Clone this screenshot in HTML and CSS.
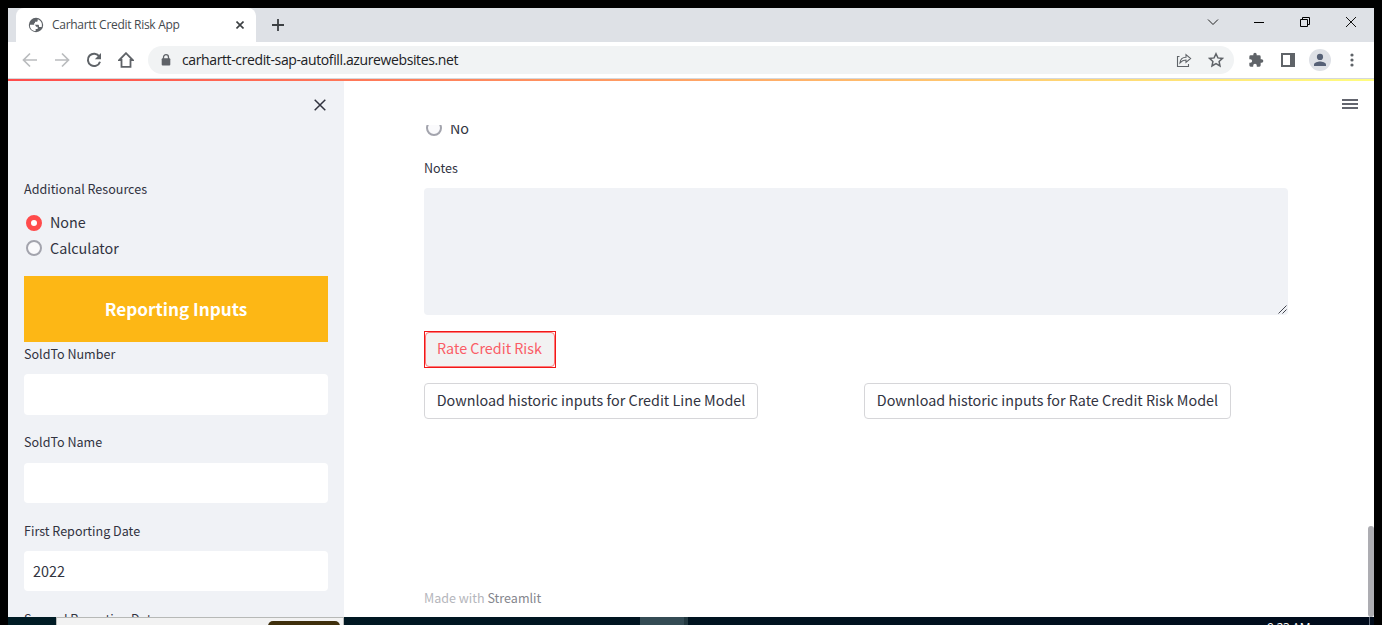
FILE: index.html
```html
<!DOCTYPE html>
<html lang="en">
<head>
<meta charset="utf-8">
<title>Carhartt Credit Risk App</title>
<link rel="stylesheet" href="styles.css">
</head>
<body>
<div class="browser">
  <header class="tabstrip">
    <div class="tab">
      <svg class="globe" viewBox="0 0 24 24" width="16" height="16"><circle cx="12" cy="12" r="10.800" fill="#5f6368"/><path d="M3 11.500h6c2 0 3 1.500 3 3h2.500v3.500h-3v3C6 21 2.500 17 3 11.500zM14.500 3.500v2c0 1-1 1.500-2 1.500h-2v2.500h-1.500v2h6c1 0 1.500 1 1.500 2v1.500h4C22 10 19.500 5 14.500 3.500z" fill="#fff"/></svg>
      <span class="tab-title">Carhartt Credit Risk App</span>
      <svg class="tab-close" viewBox="0 0 8 8" width="8" height="8"><path d="M.5.5l7 7M7.500.5l-7 7" stroke="#3c4043" stroke-width="1.600"/></svg>
    </div>
    <svg class="new-tab" viewBox="0 0 12 12" width="12" height="12"><path d="M6 0v12M0 6h12" stroke="#3c4043" stroke-width="1.800"/></svg>
    <div class="window-controls">
      <svg viewBox="0 0 12 12" width="12" height="12"><path d="M1 3.500l5 5 5-5" fill="none" stroke="#222"/></svg>
      <svg viewBox="0 0 12 12" width="12" height="12"><path d="M1 6.500h10" stroke="#000"/></svg>
      <svg viewBox="0 0 12 12" width="12" height="12"><path d="M1.500 3.500h7v7h-7zM3.500 3V1.500h7v7H9" fill="none" stroke="#000"/></svg>
      <svg viewBox="0 0 12 12" width="12" height="12"><path d="M1 1l10 10M11 1L1 11" stroke="#111"/></svg>
    </div>
  </header>
  <nav class="toolbar">
    <div class="nav-icons">
      <svg viewBox="0 0 16 16" width="16" height="16"><path d="M15 8H2M8 1.500L1.500 8 8 14.500" fill="none" stroke="#babcbe" stroke-width="1.700"/></svg>
      <svg viewBox="0 0 16 16" width="16" height="16"><path d="M1 8h13M8 1.500L14.500 8 8 14.500" fill="none" stroke="#babcbe" stroke-width="1.700"/></svg>
      <svg viewBox="0 0 16 16" width="16" height="16"><path d="M13.300 4.500A6.200 6.200 0 1 0 14 9.700" fill="none" stroke="#5f6368" stroke-width="2"/><path d="M15 1v6.200H8.800z" fill="#5f6368"/></svg>
      <svg viewBox="0 0 16 16" width="16" height="16"><path d="M8 1.200L1.300 8H3.500v6.800h9V8h2.200z" fill="none" stroke="#5f6368" stroke-width="1.800"/></svg>
    </div>
    <div class="address">
      <svg class="lock" viewBox="0 0 10 12" width="10" height="12"><path d="M2.500 5V3.200a2.500 2.500 0 0 1 5 0V5" fill="none" stroke="#5f6368" stroke-width="1.300"/><rect x=".7" y="4.300" width="8.600" height="7.200" rx="1" fill="#5f6368"/></svg>
      <span class="url">carhartt-credit-sap-autofill.azurewebsites.net</span>
      <svg class="share" viewBox="0 0 16 16" width="16" height="16"><path d="M3.500 4.500h-2v10h11V12M4 10.800c.4-3.800 2.500-5.600 6-5.600V2.600l4.600 3.900-4.600 3.900V8C7.500 8 5.500 9 4 10.800z" fill="none" stroke="#5f6368" stroke-width="1.100"/></svg>
      <svg viewBox="0 0 16 16" width="16" height="16"><path d="M8 1.800l1.900 4.100 4.600.5-3.400 3.100.9 4.500-4-2.300L4 14l.9-4.500L1.500 6.400l4.600-.5z" fill="none" stroke="#5f6368" stroke-width="1.500"/></svg>
    </div>
    <div class="tools">
      <svg viewBox="0 0 24 24" width="16" height="16"><path d="M20.500 11H19V7a2 2 0 0 0-2-2h-4V3.500a2.500 2.500 0 0 0-5 0V5H4a2 2 0 0 0-2 2v3.800h1.500a2.700 2.700 0 0 1 0 5.400H2V20a2 2 0 0 0 2 2h3.800v-1.500a2.700 2.700 0 0 1 5.400 0V22H17a2 2 0 0 0 2-2v-4h1.500a2.500 2.500 0 0 0 0-5z" fill="#5f6368"/></svg>
      <svg viewBox="0 0 14 14" width="14" height="14"><path d="M0 0h14v14H0zM2 2v10h7V2z" fill="#5f6368" fill-rule="evenodd"/></svg>
      <svg class="avatar" viewBox="0 0 22 22" width="22" height="22"><circle cx="11" cy="11" r="11" fill="#dee1e6"/><circle cx="11" cy="7.900" r="3.100" fill="#566176"/><path d="M5 17v-1.600c0-2 4-3 6-3s6 1 6 3V17z" fill="#566176"/></svg>
      <svg class="kebab" viewBox="0 0 4 14" width="4" height="14"><g fill="#5f6368"><circle cx="2" cy="2" r="1.600"/><circle cx="2" cy="7" r="1.600"/><circle cx="2" cy="12" r="1.600"/></g></svg>
    </div>
  </nav>
  <div class="decoration"></div>
  <div class="app">
    <aside class="sidebar">
      <svg class="collapse" viewBox="0 0 12 12" width="12" height="12"><path d="M.7.7l10.600 10.600M11.300.7L.7 11.300" stroke="#31333f" stroke-width="1.500"/></svg>
      <p class="label resources">Additional Resources</p>
      <label class="option"><span class="radio checked"></span><span>None</span></label>
      <label class="option calc"><span class="radio"></span><span>Calculator</span></label>
      <h2 class="banner">Reporting Inputs</h2>
      <div class="field first"><p class="label">SoldTo Number</p><div class="input"></div></div>
      <div class="field second"><p class="label">SoldTo Name</p><div class="input"></div></div>
      <div class="field"><p class="label">First Reporting Date</p><div class="input">2022</div></div>
      <div class="field"><p class="label">Second Reporting Date</p></div>
    </aside>
    <main class="main">
      <svg class="menu" viewBox="0 0 16 10" width="16" height="10"><path d="M0 1h16M0 5h16M0 9h16" stroke="#31333f" stroke-width="1.600"/></svg>
      <div class="scroller">
        <label class="option no"><span class="radio"></span><span>No</span></label>
        <p class="label notes">Notes</p>
        <div class="textarea"><svg viewBox="0 0 9 9" width="9" height="9"><path d="M.5 8.500l8-8M4.500 8.500l4-4" stroke="#44464f" stroke-width="1"/></svg></div>
        <div class="highlight"><button class="btn rate">Rate Credit Risk</button></div>
        <div class="downloads">
          <button class="btn line">Download historic inputs for Credit Line Model</button>
          <button class="btn risk">Download historic inputs for Rate Credit Risk Model</button>
        </div>
        <footer class="footer">Made with <span>Streamlit</span></footer>
      </div>
      <div class="scrollbar"></div>
    </main>
  </div>
</div>
<div class="taskbar">
  <div class="search"><span></span></div>
  <div class="active-app"></div>
  <div class="clock">9:23 AM</div>
  <div class="peek"></div>
</div>
</body>
</html>
```
FILE: styles.css
```css
* { box-sizing: border-box; }
svg { display: block; flex: none; }
body {
  margin: 0; padding: 8px 8px 0; width: 1382px; height: 625px; overflow: hidden;
  background: #000; color: #31333f;
  font: 14.35px/24px "Noto Sans CJK SC", "Open Sans", sans-serif;
}
p, h2 { margin: 0; }
.browser { height: 609px; display: flex; flex-direction: column; background: #fff; overflow: hidden; }

.tabstrip { height: 34px; flex: none; display: flex; align-items: center; background: #dee1e6; }
.tab {
  width: 240px; height: 34px; margin-left: 8px; padding: 0 12px; display: flex; align-items: center;
  background: #fff; border-radius: 8px 8px 0 0;
}
.tab-title { margin-left: 8px; font: 12px/16px "Open Sans", sans-serif; color: #45494d; white-space: nowrap; letter-spacing: -.29px; }
.tab-close { margin-left: auto; }
.new-tab { margin-left: 16px; }
.window-controls { margin: -6px 17px 0 auto; display: flex; gap: 34px; }

.toolbar { height: 37px; flex: none; display: flex; align-items: center; border-bottom: 1px solid #d5d8dc; }
.nav-icons { width: 140px; padding-left: 14px; display: flex; gap: 16px; }
.address { width: 1086px; height: 28px; padding: 0 10px 0 13px; display: flex; align-items: center; background: #f1f3f4; border-radius: 14px; }
.url { margin-left: 11px; font: 14px/20px "Open Sans", sans-serif; color: #202124; letter-spacing: -.38px; }
.share { margin: 0 16px 0 auto; }
.tools { margin-left: 14px; display: flex; align-items: center; gap: 17px; }
.tools .avatar { margin-left: -3px; }
.tools .kebab { margin-left: 2px; }

.decoration { height: 2px; flex: none; background: linear-gradient(90deg, #ff4b4b, #fffd80); }
.app { flex: 1; display: flex; min-height: 0; }
.sidebar { width: 336px; padding: 18px 16px 0; background: #f0f2f6; overflow: hidden; }
.collapse { margin-left: 290px; }
.label { font-size: 12.550px; line-height: 20px; white-space: nowrap; }
.resources { margin: 68px 0 11px; }
.option { height: 26px; display: flex; align-items: center; gap: 8px; padding-left: 2px; }
.option > span:last-child { margin-top: -2px; }
.calc { height: 24px; }
.calc > span:last-child { margin-top: 0; }
.radio { width: 16px; height: 16px; border: 2px solid #a3a4ad; border-radius: 50%; background: #fafafc; }
.radio.checked { border: 5px solid #ff4b4b; background: #fff; }
.banner { height: 66px; margin-top: 16px; background: #fdb715; color: #fff; font-size: 17.200px; line-height: 65px; text-align: center; }
.field { height: 88.500px; }
.field.first { padding-top: 2px; height: 90px; }
.input { height: 40px; margin-top: 10px; padding: 0 9px; line-height: 39px; background: #fff; border-radius: 4px; }
.first .input { height: 41px; }
.second .input { margin-top: 11px; }

.main { flex: 1; position: relative; padding: 17px 16px 0 80px; }
.menu { margin-left: auto; margin-top: 1px; }
.scroller { width: 864px; margin-top: 16px; height: 492px; overflow: hidden; }
.no { margin-top: -10px; }
.no > span:last-child { margin-top: 0; }
.notes { margin-top: 17px; }
.textarea { height: 127px; margin-top: 10px; display: flex; justify-content: flex-end; align-items: flex-end; padding: 1px; background: #f0f2f6; border-radius: 4px; }
.highlight { width: 132px; height: 37px; margin-top: 16px; border: 1px solid #f01818; }
.btn { height: 36px; padding: 0 0 2px; border: 1px solid #d6d6d9; border-radius: 4px; background: #fff; color: #31333f; font: inherit; line-height: 32px; white-space: nowrap; }
.rate { display: block; width: 130px; height: 35px; padding: 0 1px 3px 0; line-height: 30px; border-color: #f77; background: #f2f2f2; color: #fa5c66; }
.downloads { display: grid; grid-template-columns: 440px 1fr; margin-top: 15px; }
.line { width: 334px; }
.risk { width: 367px; }
.footer { margin-top: 169px; font-size: 12.550px; line-height: 20px; color: #b5b6bc; }
.footer span { color: #85868d; }
.scrollbar { position: absolute; right: 0; bottom: 0; width: 6px; height: 91px; border-radius: 3px; background: #adadb2; }

.taskbar { height: 8px; display: flex; overflow: hidden; background: linear-gradient(90deg, #001c25, #000b1b); }
.search { width: 288px; height: 8px; margin-left: 48px; border: 1px solid #b7b9b7; border-bottom: 0; background: #f2f2f2; padding: 3px 3px 0 0; }
.search span { display: block; width: 72px; height: 8px; margin-left: auto; border-radius: 5px 5px 0 0; background: #3f2f0c; }
.active-app { width: 48px; margin-left: 296px; background: #344b54; border-right: 4px solid #223840; }
.clock { margin: 4px 0 0 579px; font: 12px/14px "Open Sans", sans-serif; color: #fff; white-space: nowrap; width: 102px; letter-spacing: -.3px; }
.peek { width: 1px; background: #667080; }
```
